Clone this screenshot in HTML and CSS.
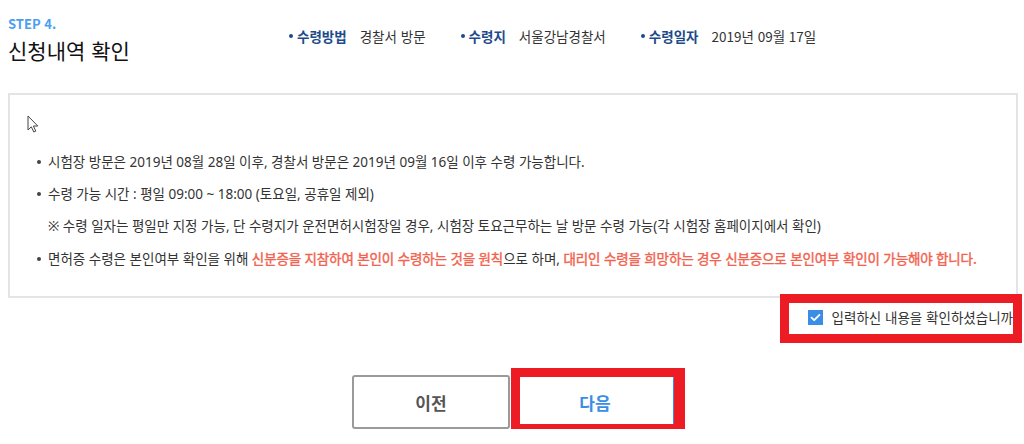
FILE: index.html
```html
<!DOCTYPE html>
<html lang="ko">
<head>
<meta charset="utf-8">
<title>신청내역 확인</title>
<link rel="stylesheet" href="styles.css">
</head>
<body>
<div class="page">
  <header class="header">
    <div class="head-left">
      <div class="step">STEP 4.</div>
      <h1 class="title">신청내역 확인</h1>
    </div>
    <ul class="info">
      <li class="info-item"><span class="info-label">수령방법</span><span class="info-value">경찰서 방문</span></li>
      <li class="info-item"><span class="info-label">수령지</span><span class="info-value">서울강남경찰서</span></li>
      <li class="info-item"><span class="info-label">수령일자</span><span class="info-value">2019년 09월 17일</span></li>
    </ul>
  </header>

  <section class="notice">
    <svg class="cursor" width="12" height="18" viewBox="0 0 12 18" aria-hidden="true">
      <path d="M1 1 L1 15 L4.3 11.8 L6.8 17 L8.8 16.1 L6.4 11 L10.8 11 Z" fill="#fff" stroke="#444" stroke-width="1" stroke-linejoin="round"/>
    </svg>
    <ul class="notes">
      <li class="note bullet">시험장 방문은 2019년 08월 28일 이후, 경찰서 방문은 2019년 09월 16일 이후 수령 가능합니다.</li>
      <li class="note bullet">수령 가능 시간 : 평일 09:00 ~ 18:00 (토요일, 공휴일 제외)</li>
      <li class="note sub">※ 수령 일자는 평일만 지정 가능, 단 수령지가 운전면허시험장일 경우, 시험장 토요근무하는 날 방문 수령 가능(각 시험장 홈페이지에서 확인)</li>
      <li class="note bullet">면허증 수령은 본인여부 확인을 위해 <em class="warn">신분증을 지참하여 본인이 수령하는 것을 원칙</em>으로 하며, <em class="warn">대리인 수령을 희망하는 경우 신분증으로 본인여부 확인이 가능해야 합니다.</em></li>
    </ul>
  </section>

  <div class="check-row">
    <label class="check framed">
      <span class="check-box">
        <svg width="15" height="15" viewBox="0 0 15 15" aria-hidden="true">
          <rect width="15" height="15" fill="#3a8ee6"/>
          <path d="M3.5 7.6 L6.2 10.2 L11.5 4.8" fill="none" stroke="#fff" stroke-width="1.8" stroke-linecap="round" stroke-linejoin="round"/>
        </svg>
      </span>
      <span class="check-text">입력하신 내용을 확인하셨습니까</span>
    </label>
  </div>

  <div class="buttons">
    <button class="btn btn-prev" type="button">이전</button>
    <div class="btn-wrap framed-btn">
      <button class="btn btn-next" type="button">다음</button>
    </div>
  </div>
</div>
</body>
</html>
```

FILE: styles.css
```css
* { box-sizing: border-box; }

html, body {
  margin: 0;
  padding: 0;
  background: #fff;
}

body {
  font-family: "Noto Sans CJK KR", "Noto Sans", sans-serif;
  color: #333;
  overflow: hidden;
}

.page {
  padding: 0 6px 0 8px;
}

/* header */
.header {
  display: flex;
  align-items: flex-start;
  height: 93px;
  padding-top: 16px;
}

.head-left {
  flex: none;
  width: 281px;
}

.step {
  font-size: 13px;
  line-height: 16px;
  font-weight: 700;
  color: #4b9ff0;
}

.title {
  margin: 4px 0 0;
  font-size: 21px;
  line-height: 28px;
  font-weight: 400;
  color: #111;
}

.info {
  display: flex;
  gap: 35px;
  margin: 11px 0 0;
  padding: 0;
  list-style: none;
  font-size: 13.5px;
  line-height: 18px;
}

.info-item {
  display: flex;
  align-items: center;
}

.info-item::before {
  content: "";
  width: 4px;
  height: 4px;
  border-radius: 50%;
  background: #1d4b8a;
  margin-right: 4px;
}

.info-label {
  font-weight: 700;
  color: #1d4b8a;
  margin-right: 13px;
}

.info-value {
  color: #333;
}

/* notice box */
.notice {
  border: 2px solid #e4e4e4;
  padding: 20px 10px 21px 17px;
}

.cursor {
  display: block;
}

.notes {
  margin: 13px 0 0;
  padding: 0;
  list-style: none;
  font-family: "Noto Sans", "Noto Sans CJK KR", sans-serif;
  font-size: 13.5px;
  line-height: 32px;
  color: #333;
}

.note {
  white-space: nowrap;
}

.note.bullet::before {
  content: "";
  display: inline-block;
  width: 4px;
  height: 4px;
  border-radius: 50%;
  background: #444;
  vertical-align: middle;
  margin: 0 7px 2px 10px;
}

.note.sub {
  padding-left: 21px;
}

.warn {
  font-style: normal;
  font-family: "Noto Sans CJK KR", "Noto Sans", sans-serif;
  font-weight: 400;
  letter-spacing: -0.15px;
  color: #f2624e;
  -webkit-text-stroke: 0.4px #f2624e;
}

/* checkbox */
.check-row {
  display: flex;
  justify-content: flex-end;
  margin-top: 11px;
  padding-right: 5px;
}

.check {
  display: flex;
  align-items: center;
  gap: 9px;
  height: 16px;
  font-size: 13.5px;
  color: #333;
  white-space: nowrap;
}

.check-box {
  display: block;
  width: 15px;
  height: 15px;
}

.check-box svg {
  display: block;
}

.framed {
  position: relative;
}

.framed::after {
  content: "";
  position: absolute;
  top: -15px;
  left: -28px;
  right: -9px;
  bottom: -18px;
  border: 9px solid #ed1c24;
  pointer-events: none;
}

/* buttons */
.buttons {
  display: flex;
  justify-content: center;
  gap: 6px;
  margin-top: 50px;
}

.btn {
  width: 158px;
  height: 54px;
  background: #fff;
  border-radius: 3px;
  font-family: inherit;
  font-size: 17px;
  font-weight: 700;
  cursor: pointer;
}

.btn-prev {
  border: 2px solid #9a9a9a;
  color: #555;
}

.btn-next {
  display: block;
  border: 1px solid #3a8ee6;
  color: #3a8ee6;
}

.framed-btn {
  position: relative;
}

.framed-btn::after {
  content: "";
  position: absolute;
  top: -7px;
  left: -5px;
  right: -11px;
  bottom: -5px;
  border-style: solid;
  border-color: #ed1c24;
  border-width: 9px 11px 10px 9px;
  pointer-events: none;
}
```
